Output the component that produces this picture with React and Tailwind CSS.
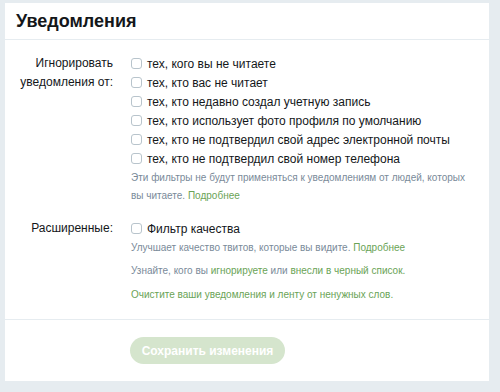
import React from 'react';

const FILTERS = [
  'тех, кого вы не читаете',
  'тех, кто вас не читает',
  'тех, кто недавно создал учетную запись',
  'тех, кто использует фото профиля по умолчанию',
  'тех, кто не подтвердил свой адрес электронной почты',
  'тех, кто не подтвердил свой номер телефона',
];

function Checkbox({ label }) {
  return (
    <label className="flex items-center h-[19px] gap-[5px] whitespace-nowrap">
      <span className="w-[11px] h-[11px] rounded-[3px] border border-[#b8c4cc] bg-white shrink-0" />
      <span>{label}</span>
    </label>
  );
}

const link = 'text-[#6aa356]';
const hint = 'text-[10px] leading-[18px] text-[#7a8a99]';

export default function App() {
  return (
    <div
      className="w-[500px] h-[392px] bg-[#e6ecf0] pt-[3px] pl-[5px] text-[12px] text-[#14171a]"
      style={{ fontFamily: '"Liberation Sans", Arial, sans-serif' }}
    >
      <div className="w-[484px] bg-white">
        <div className="h-[37px] flex items-center px-[11px] border-b border-[#e6ecf0]">
          <h1 className="text-[18px] font-bold leading-none">Уведомления</h1>
        </div>

        <div className="pt-[14px] pb-[15px] border-b border-[#e6ecf0]">
          <div className="flex">
            <div className="w-[108px] text-right leading-[19px] shrink-0">
              Игнорировать уведомления от:
            </div>
            <div className="ml-[18px] w-[345px]">
              {FILTERS.map((f) => (
                <Checkbox key={f} label={f} />
              ))}
              <p className={`${hint} mt-[1px]`}>
                Эти фильтры не будут применяться к уведомлениям от людей, которых вы читаете.{' '}
                <span className={link}>Подробнее</span>
              </p>
            </div>
          </div>

          <div className="flex mt-[14px]">
            <div className="w-[108px] text-right leading-[19px] shrink-0">Расширенные:</div>
            <div className="ml-[18px] w-[345px]">
              <Checkbox label="Фильтр качества" />
              <p className={`${hint} mt-[1px]`}>
                Улучшает качество твитов, которые вы видите. <span className={link}>Подробнее</span>
              </p>
              <p className={`${hint} mt-[5px]`}>
                Узнайте, кого вы <span className={link}>игнорируете</span> или{' '}
                <span className={link}>внесли в черный список.</span>
              </p>
              <p className="text-[10px] leading-[18px] text-[#6aa356] mt-[6px]">
                Очистите ваши уведомления и ленту от ненужных слов.
              </p>
            </div>
          </div>
        </div>

        <div className="pt-[17px] pb-[17px] pl-[125px]">
          <button className="h-[27px] w-[155px] rounded-full bg-[#d5e5cd] text-white font-bold text-[12px] whitespace-nowrap">
            Сохранить изменения
          </button>
        </div>
      </div>
    </div>
  );
}
